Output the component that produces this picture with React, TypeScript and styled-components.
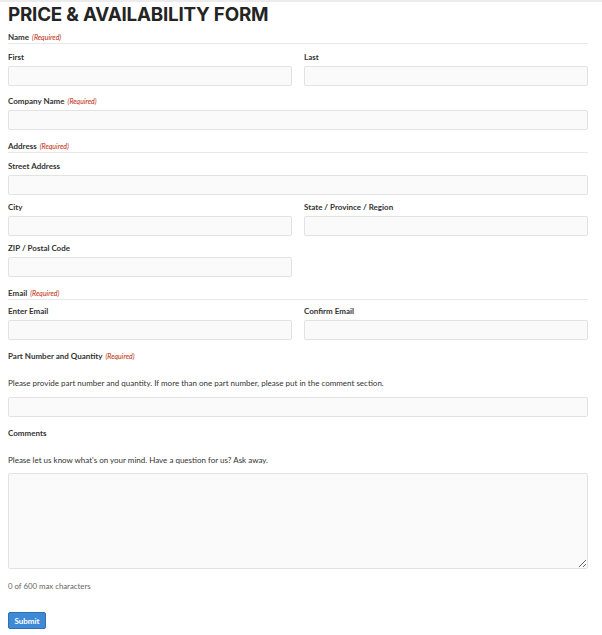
import React, { useState } from 'react';
import styled, { createGlobalStyle } from 'styled-components';

const GlobalStyle = createGlobalStyle`
  html, body {
    margin: 0;
    padding: 0;
    background: #fff;
  }
  body {
    font-family: Lato, 'Open Sans', sans-serif;
    color: #222;
  }
`;

const Page = styled.div`
  box-sizing: border-box;
  width: 602px;
  padding: 0 14px 0 8px;
  border-top: 2px solid #ececec;
`;

const Title = styled.h1`
  margin: 2px 0 5px;
  font-family: Inter, 'Open Sans', sans-serif;
  font-weight: 700;
  font-size: 18.8px;
  line-height: 22px;
  letter-spacing: -0.2px;
  color: #242424;
`;

const Form = styled.form`
  display: flex;
  flex-direction: column;
  width: 580px;
`;

const Legend = styled.div<{ $gap?: number }>`
  font-size: 8px;
  font-weight: 700;
  line-height: 12px;
  color: #333;
  border-bottom: 1.5px solid #e8e8e8;
  margin: 0 0 ${({ $gap = 7 }) => $gap}px;
`;

const Required = styled.span`
  margin-left: 3px;
  font-size: 7px;
  font-weight: 400;
  font-style: italic;
  color: #c02b0a;
`;

const Row = styled.div<{ $cols?: number }>`
  display: grid;
  grid-template-columns: ${({ $cols = 1 }) => ($cols === 2 ? '1fr 1fr' : '1fr')};
  column-gap: 12px;
`;

const Field = styled.div<{ $mb?: number }>`
  display: flex;
  flex-direction: column;
  margin-bottom: ${({ $mb = 9 }) => $mb}px;
`;

const Label = styled.label`
  font-size: 8px;
  font-weight: 700;
  line-height: 12px;
  color: #333;
  margin-bottom: 3px;
`;

const Description = styled.div<{ $mt?: number; $mb?: number }>`
  font-size: 8px;
  line-height: 12px;
  color: #333;
  margin: ${({ $mt = 12 }) => $mt}px 0 ${({ $mb = 8 }) => $mb}px;
`;

const Input = styled.input`
  box-sizing: border-box;
  height: 20px;
  width: 100%;
  margin: 0;
  padding: 0 6px;
  background: #fafafa;
  border: 1px solid #e2e2e2;
  border-radius: 2px;
  font: inherit;
  font-size: 9px;
  outline: none;
`;

const TextArea = styled.textarea`
  box-sizing: border-box;
  display: block;
  height: 96px;
  width: 100%;
  margin: 0;
  padding: 6px;
  background: #fafafa;
  border: 1px solid #e2e2e2;
  border-radius: 2px;
  font: inherit;
  font-size: 9px;
  resize: vertical;
  outline: none;
`;

const Counter = styled.div`
  font-size: 7.8px;
  line-height: 12px;
  color: #666;
  margin: 11px 0 20px;
`;

const SubmitButton = styled.button`
  box-sizing: border-box;
  align-self: flex-start;
  height: 17px;
  width: 38px;
  padding: 0;
  background: #3e8ad6;
  border: 1px solid #2f6fb3;
  border-radius: 2px;
  color: #fff;
  font-family: Lato, 'Open Sans', sans-serif;
  font-size: 8px;
  font-weight: 700;
  cursor: pointer;
`;

export default function App() {
  const [comment, setComment] = useState('');

  return (
    <>
      <GlobalStyle />
      <Page>
        <Title>PRICE &amp; AVAILABILITY FORM</Title>
        <Form onSubmit={(e) => e.preventDefault()}>
          <Legend>
            Name<Required>(Required)</Required>
          </Legend>
          <Row $cols={2}>
            <Field>
              <Label>First</Label>
              <Input />
            </Field>
            <Field>
              <Label>Last</Label>
              <Input />
            </Field>
          </Row>

          <Field $mb={10}>
            <Label>
              Company Name<Required>(Required)</Required>
            </Label>
            <Input />
          </Field>

          <Legend>
            Address<Required>(Required)</Required>
          </Legend>
          <Field $mb={6}>
            <Label>Street Address</Label>
            <Input />
          </Field>
          <Row $cols={2}>
            <Field $mb={6}>
              <Label>City</Label>
              <Input />
            </Field>
            <Field $mb={6}>
              <Label>State / Province / Region</Label>
              <Input />
            </Field>
          </Row>
          <Row $cols={2}>
            <Field $mb={10}>
              <Label>ZIP / Postal Code</Label>
              <Input />
            </Field>
          </Row>

          <Legend $gap={5}>
            Email<Required>(Required)</Required>
          </Legend>
          <Row $cols={2}>
            <Field $mb={10}>
              <Label>Enter Email</Label>
              <Input />
            </Field>
            <Field $mb={10}>
              <Label>Confirm Email</Label>
              <Input />
            </Field>
          </Row>

          <Field $mb={10}>
            <Label>
              Part Number and Quantity<Required>(Required)</Required>
            </Label>
            <Description>
              Please provide part number and quantity. If more than one part number, please put in
              the comment section.
            </Description>
            <Input />
          </Field>

          <Field $mb={0}>
            <Label>Comments</Label>
            <Description $mb={7}>
              Please let us know what's on your mind. Have a question for us? Ask away.
            </Description>
            <TextArea
              maxLength={600}
              value={comment}
              onChange={(e) => setComment(e.target.value)}
            />
          </Field>
          <Counter>{comment.length} of 600 max characters</Counter>
          <SubmitButton type="submit">Submit</SubmitButton>
        </Form>
      </Page>
    </>
  );
}
